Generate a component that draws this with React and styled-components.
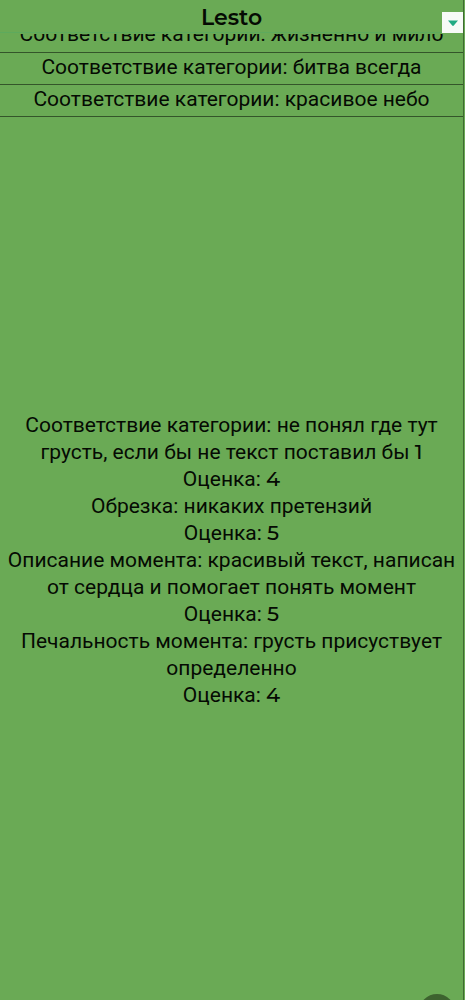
import styled, { createGlobalStyle } from 'styled-components';

const rows = [
  'Соответствие категории: битва всегда',
  'Соответствие категории: красивое небо',
];

const reviews = [
  {
    text: 'Соответствие категории: не понял где тут грусть, если бы не текст поставил бы',
    amount: 1,
    score: 4,
  },
  { text: 'Обрезка: никаких претензий', score: 5 },
  {
    text: 'Описание момента: красивый текст, написан от сердца и помогает понять момент',
    score: 5,
  },
  {
    text: 'Печальность момента: грусть присуствует определенно',
    score: 4,
  },
];

function App() {
  return (
    <Screen>
      <GlobalStyle />
      <Sheet>
        <Header>
          <Title>Lesto</Title>
          <MenuButton type="button" aria-label="Меню столбца">
            <svg width="10" height="6" viewBox="0 0 10 6">
              <path d="M0 0.5h10L6 5.3a1.3 1.3 0 0 1-2 0z" fill="#22aa84" />
            </svg>
          </MenuButton>
        </Header>
        <Table>
          <tbody>
            <Row $height={20}>
              <Cell>
                <Scrolled>Соответствие категории: жизненно и мило</Scrolled>
              </Cell>
            </Row>
            {rows.map(text => (
              <Row key={text} $height={32}>
                <Cell $lift>{text}</Cell>
              </Row>
            ))}
            <Row $height={888}>
              <Cell>
                {reviews.map(({ text, amount, score }) => (
                  <Review key={text}>
                    <p>
                      {text} {amount && <Digit>{amount}</Digit>}
                    </p>
                    <p>
                      Оценка: <Digit>{score}</Digit>
                    </p>
                  </Review>
                ))}
              </Cell>
            </Row>
          </tbody>
        </Table>
      </Sheet>
      <FloatingButton type="button" aria-label="Прокрутить вниз" />
    </Screen>
  );
}

const GlobalStyle = createGlobalStyle`
  * {
    box-sizing: border-box;
  }

  body {
    margin: 0;
    background: #6aaa55;
  }
`;

const Screen = styled.div`
  position: relative;
  height: 100vh;
  padding-right: 1px;
  overflow: hidden;
  color: #050a03;
  font-family: Roboto, sans-serif;
  font-size: 21px;
  line-height: 27px;
`;

const Sheet = styled.main`
  border-right: 1px solid #3f6b31;
`;

const Header = styled.header`
  display: grid;
  grid-template-columns: 1fr auto 1fr;
  align-items: end;
  height: 33px;
  box-shadow: inset 0 -1px #5daa5d;
`;

const Title = styled.h1`
  grid-column: 2;
  margin: 0;
  padding-bottom: 2px;
  font-family: Montserrat, Inter, sans-serif;
  font-size: 22px;
  font-weight: 600;
  line-height: 27px;
`;

const MenuButton = styled.button`
  display: flex;
  align-items: center;
  justify-content: center;
  justify-self: end;
  width: 21px;
  height: 21px;
  padding: 0;
  border: 0;
  background: #f7faf7;
`;

const Table = styled.table`
  width: 100%;
  border-spacing: 0;
  text-align: center;
`;

const Row = styled.tr`
  height: ${({ $height }) => $height}px;
`;

const Cell = styled.td`
  padding: 0;
  padding-bottom: ${({ $lift }) => ($lift ? '3px' : 0)};
  border-bottom: 1px solid #34552a;
  vertical-align: middle;
`;

/* the row that has half gone under the header */
const Scrolled = styled.div`
  display: flex;
  align-items: flex-end;
  justify-content: center;
  height: 18px;
  padding-bottom: 4px;
  overflow: hidden;
  white-space: nowrap;
`;

const Review = styled.div`
  p {
    margin: 0;
  }
`;

const Digit = styled.span`
  font-family: Montserrat, Inter, sans-serif;
  font-weight: 500;
  line-height: 1;
`;

const FloatingButton = styled.button`
  position: absolute;
  right: 10px;
  bottom: -30px;
  width: 36px;
  height: 36px;
  padding: 0;
  border: 0;
  border-radius: 50%;
  background: #3d632f;
`;

export default App;
